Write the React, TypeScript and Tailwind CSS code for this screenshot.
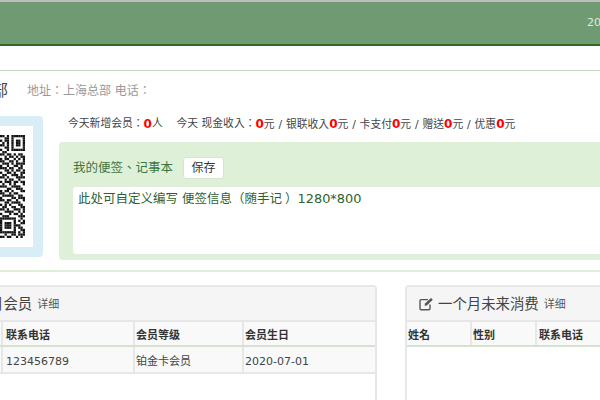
const font = { fontFamily: '"DejaVu Sans", "Noto Sans CJK TC", sans-serif' };

// 1 = dark module, right part of the QR code visible in the crop
const qr = [
  '11010111111', '00110100001', '10110101101', '01010101101', '11010101101', '00110100001', '10010111111',
  '01100000000', '11011010110', '00101101011', '10110010101', '11001101001', '01110101111', '10010011010',
  '11101100110', '00110101101', '10011010011', '01100111010', '11010001111', '00101100100', '10111011011',
  '01001010001', '11100111100', '00011001110', '10110100011', '11001011000', '01111100110', '10000110111',
  '11011001001', '00110111100', '10101000110', '01100110011', '11010011101', '00111100101', '10001011010',
  '01110000111', '11111110010', '10000010101', '10111010011', '10111011100', '10111010110', '10000010011',
  '11111110101', '00100110111', '11011001010',
];

function QrCode() {
  return (
    <svg width="25" height="103" viewBox="0 0 11 45" preserveAspectRatio="none">
      {qr.flatMap((row, y) =>
        row.split('').map((c, x) => (c === '1' ? <rect key={`${x}-${y}`} x={x} y={y} width="1" height="1" fill="#111" /> : null)),
      )}
    </svg>
  );
}

function Num() {
  return <b className="text-[12px] text-[#ff0000]">0</b>;
}

function Cell({ w, children, head }: { w: string; children?: string; head?: boolean }) {
  return (
    <div className={`${w} flex shrink-0 items-center border-r-2 border-[#e7e7e7] text-[11px] ${head ? 'pt-[5px] font-bold' : 'pt-[6px]'}`}>{children}</div>
  );
}

export default function App() {
  return (
    <div className="h-[400px] w-[600px] overflow-hidden bg-white text-[#555]" style={font}>
      <div className="h-[46px] border-t-2 border-b-2 border-t-[#bdbdbd] border-b-[#2f6a22] bg-[#6f9a72]">
        <div className="pt-[13px] pl-[587px] text-[11px] whitespace-nowrap text-[#dfeadf]">2020</div>
      </div>

      <div className="mt-[24px] h-[200px] border-t border-[#c3dabd]">
        <div className="flex h-[40px] items-center">
          <span className="-ml-[8px] w-[35px] text-[16px] text-[#444]">部</span>
          <span className="text-[12px] text-[#999]">地址：上海总部 电话：</span>
        </div>
        <div className="flex">
          <div className="mt-[5px] flex h-[141px] w-[43px] shrink-0 items-center rounded-r-[4px] bg-[#d9edf7]">
            <div className="flex h-[121px] w-[33px] items-center justify-start bg-white">
              <QrCode />
            </div>
          </div>
          <div className="ml-[16px] flex-1">
            <div className="flex h-[26px] items-center pl-[9px] text-[10.8px] whitespace-pre text-[#444]">
              今天新增会员：<Num />人    今天 现金收入：<Num />
              <span className="[word-spacing:0.4px]">元 / 银联收入<Num />元 / 卡支付<Num />元 / 赠送<Num />元 / 优惠<Num />元</span>
            </div>
            <div className="mt-[5px] h-[118px] w-[560px] rounded-[4px] bg-[#dff0d8] pt-[15px] pl-[14px]">
              <div className="flex items-center text-[12.5px] text-[#3c763d]">
                我的便签、记事本
                <button className="ml-[10px] h-[22px] w-[41px] rounded-[3px] border border-[#d5e6cd] bg-white text-[12px] text-[#333]">保存</button>
              </div>
              <div className="mt-[8px] h-[67px] rounded-l-[3px] bg-white pt-[2px] pl-[5px] text-[12.5px] text-[#2f5f30]">
                此处可自定义编写 便签信息<span className="-mr-[1px] tracking-[1px]">（</span>随手记<span className="ml-[3px]">）</span>
                <span className="text-[12.9px]">1280*800</span>
              </div>
            </div>
          </div>
        </div>
      </div>

      <div className="h-[2px] bg-[#dff0d8]" />

      <div className="mt-[13px] flex gap-[28px]">
        <div className="h-[200px] w-[377px] shrink-0 rounded-tr-[4px] border-t-2 border-r-2 border-[#e7e7e7]">
          <div className="flex h-[33px] items-center bg-[#f5f5f5] pt-[3px]">
            <span className="-ml-[11px] text-[14.4px] text-[#444]">月会员</span>
            <span className="ml-[5px] text-[11px] text-[#555]">详细</span>
          </div>
          <div className="flex h-[27px] border-t-2 border-b-2 border-t-[#e7e7e7] border-b-[#d5e2d0] bg-[#f9f9f9] text-[#333]">
            <Cell w="w-[3px]" />
            <Cell w="w-[132px] pl-[3px]" head>联系电话</Cell>
            <Cell w="w-[109px] pl-[1px]" head>会员等级</Cell>
            <div className="flex items-center pt-[5px] pl-[1px] text-[11px] font-bold">会员生日</div>
          </div>
          <div className="flex h-[27px] border-b-2 border-[#e7e7e7] bg-[#f9f9f9] text-[#444]">
            <Cell w="w-[3px]" />
            <Cell w="w-[132px] pl-[3px]">123456789</Cell>
            <Cell w="w-[109px] pl-[1px]">铂金卡会员</Cell>
            <div className="flex items-center pt-[6px] pl-[1px] text-[11px]">2020-07-01</div>
          </div>
        </div>

        <div className="h-[200px] flex-1 rounded-tl-[4px] border-t-2 border-l-2 border-[#e7e7e7]">
          <div className="flex h-[33px] items-center bg-[#f5f5f5] pl-[12px]">
            <svg width="15" height="14" viewBox="0 0 15 14" fill="none" stroke="#555" strokeWidth="1.4">
              <path d="M11 7.5V11.5a1.2 1.2 0 0 1-1.2 1.2H2.2A1.2 1.2 0 0 1 1 11.5V3.8a1.2 1.2 0 0 1 1.2-1.2H9" />
              <path d="M5.5 8.8 6 6.6 12 1l1.8 1.8-6 5.8z" fill="#555" stroke="none" />
            </svg>
            <span className="mt-[3px] ml-[4px] text-[14.4px] text-[#444]">一个月未来消费</span>
            <span className="mt-[3px] ml-[5px] text-[11px] text-[#555]">详细</span>
          </div>
          <div className="flex h-[27px] border-t-2 border-b-2 border-t-[#e7e7e7] border-b-[#d5e2d0] bg-[#f9f9f9] text-[#333]">
            <Cell w="w-[65px] pl-[1px]" head>姓名</Cell>
            <Cell w="w-[65px] pl-[1px]" head>性别</Cell>
            <div className="flex items-center pt-[5px] pl-[2px] text-[11px] font-bold">联系电话</div>
          </div>
        </div>
      </div>
    </div>
  );
}
